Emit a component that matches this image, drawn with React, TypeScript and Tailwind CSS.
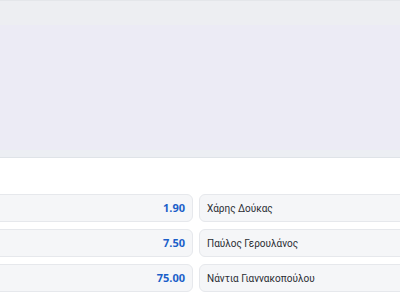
const rows = [
  { odds: "1.90", name: "Χάρης Δούκας" },
  { odds: "7.50", name: "Παύλος Γερουλάνος" },
  { odds: "75.00", name: "Νάντια Γιαννακοπούλου" },
];

export default function App() {
  return (
    <div className="w-[400px] h-[300px] overflow-hidden bg-white font-['Noto_Sans',sans-serif]">
      {/* top banner */}
      <div className="border-t border-[#e4e6ea] h-[25px] bg-[#edeef2]" />
      <div className="h-[125px] bg-[#ecebf5]" />
      <div className="h-[8px] bg-[#eceef3] border-b border-[#dfe3e8]" />

      {/* market rows */}
      <div className="mt-[36px] flex flex-col gap-[7px] -ml-[12px] w-[430px]">
        {rows.map((r) => (
          <div key={r.name} className="flex gap-[6px] h-[28px]">
            <div className="w-[205px] flex items-center justify-end pr-[7px] rounded-md border border-[#e6e8ec] bg-[#f5f6f8]">
              <span className="text-[11px] font-bold text-[#1b5fc9]">{r.odds}</span>
            </div>
            <div className="flex-1 flex items-center pl-[7px] rounded-md border border-[#e6e8ec] bg-[#f5f6f8]">
              <span className="text-[10px] text-[#2a2d33] font-['Roboto',sans-serif]">{r.name}</span>
            </div>
          </div>
        ))}
      </div>
    </div>
  );
}
